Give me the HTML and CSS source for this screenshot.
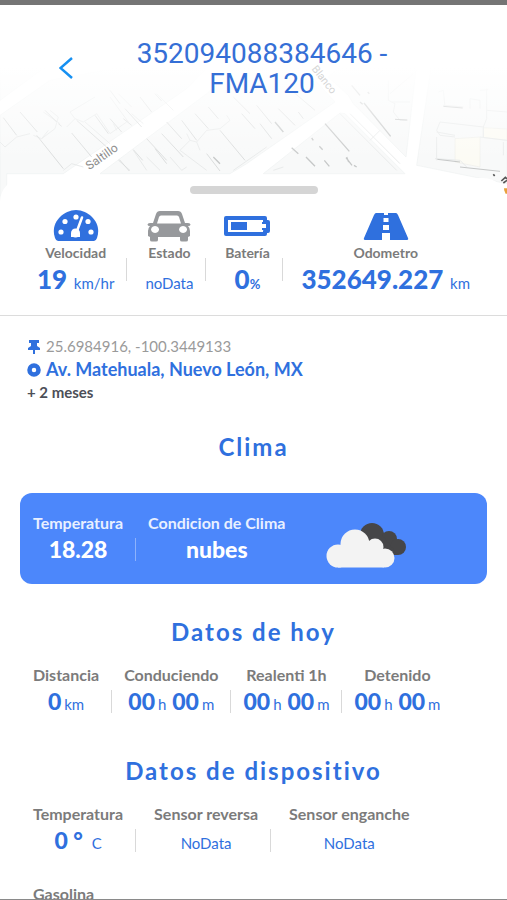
FILE: index.html
```html
<!DOCTYPE html>
<html lang="es">
<head>
<meta charset="utf-8">
<meta name="viewport" content="width=device-width, initial-scale=1">
<title>352094088384646 - FMA120</title>
<link rel="stylesheet" href="styles.css">
</head>
<body>
<div class="app">
  <header class="hero">
    <svg class="map" viewBox="0 0 1521 615" preserveAspectRatio="xMidYMax slice" aria-hidden="true">
      <defs>
        <linearGradient id="fade" x1="0" y1="0" x2="0" y2="1">
          <stop offset="0.34" stop-color="#fff"/>
          <stop offset="0.8" stop-color="#fff" stop-opacity="0"/>
        </linearGradient>
      </defs>
      <g fill="#f8f9f9" stroke="#eff1f1" stroke-width="2">
        <path d="M0 355 150 250 420 200 620 215 560 275 190 530 20 530 20 615H0z"/>
        <path d="M0 200H150L0 310z"/>
        <path d="M300 530 620 290 720 200 900 200 1005 315 740 500 690 530z"/>
        <path d="M790 530 1020 348 1035 350 1215 530z"/>
        <path d="M1030 200H1250L1218 480 1060 320 1045 295 985 240z"/>
        <path d="M1295 200H1521V560L1250 505z"/>
      </g>
      <g fill="#fcfbf4" stroke="#efefea" stroke-width="2">
        <path d="M1365 425 1440 420V510L1365 495z"/>
        <path d="M1450 392 1521 396V430L1450 422z"/>
      </g>
      <g fill="none" stroke="#e9ebeb" stroke-width="3">
        <path d="M0 435 15 450 50 420 90 410M100 415 125 425 165 395 175 360 150 340M125 425 145 400M200 390 225 365 250 375 290 350M225 365 210 345 285 300M290 350 330 410 380 375M350 400 340 380M190 520 215 500 250 510M130 345 180 380M255 375 330 440M330 300 385 375M395 350 430 380M470 290 520 340M355 290 395 330"/>
        <path d="M355 490 390 520M400 460 440 520M440 480 480 520M510 480 545 520 560 510M540 460 570 430 590 435 620 400 660 395 690 370 680 355M540 460 620 520M570 430 560 410M590 435 600 460M700 520 800 450"/>
        <path d="M1020 350 1190 520M1050 350 1200 500M1110 430 1140 400M820 520 850 510M1165 250V310L1185 320 1180 345 1200 370H1220M1175 315H1230M1170 290 1240 230"/>
        <path d="M1315 285 1330 280 1335 330M1330 325 1390 330M1410 335V305L1440 310V335M1460 275V365L1450 390V420M1440 280 1465 278M1320 375 1450 390M1320 375 1310 400 1320 415 1365 420M1310 490V420M1305 485 1380 490 1400 510M1460 340 1521 345M1310 405 1365 415M1440 420 1521 430M1510 435V475"/>
      </g>
      <g fill="none" stroke="#dbdddd" stroke-width="3">
        <path d="M10 362 50 415M60 345 112 405M110 415 190 515M135 340 170 375M175 380 185 388M215 408 275 480M230 370 320 450M285 355 325 410M330 365 365 405M375 335 425 390M370 365 395 385M420 300 455 345M465 290 485 312M330 280 360 320"/>
        <path d="M358 488 388 522M400 458 428 490M440 425 500 490M485 410 550 480M465 455 500 500M500 375 545 425M545 370 590 430M585 350 625 395M625 330 655 365M620 470 660 522M660 400 735 490M725 350 765 395M700 300 750 350"/>
        <path d="M770 325 815 380M780 380 815 425M835 335 885 385M895 345 910 365M880 285 945 340M825 375 850 405"/>
      </g>
      <g fill="none" stroke="#c6c8c8" stroke-width="4">
        <path d="M975 380 1048 463M1092 318 1172 418M875 452 895 470M918 480 945 508M958 448 968 458M973 490 988 508M1038 482 1056 505M1062 505 1070 510M1080 315 1088 322M1055 265 1080 295M935 423 940 430M1103 285 1108 290M1040 480 1046 495M825 375 850 405M640 480 660 500"/>
        <path d="M1330 328 1388 333M1312 487 1380 495M1380 510 1500 523M1185 367 1222 369" stroke-width="3"/>
      </g>
      <path fill="url(#fade)" d="M0 0H1521V615H0z"/>
      <g fill="#8d8d8d" font-family="Roboto, sans-serif" font-size="36">
        <text transform="translate(268 520) rotate(-35)">Saltillo</text>
        <text transform="translate(934 216) rotate(52)" fill="#d6d6d6" font-size="32">Blanco</text>
      </g>
      <path d="M1480 532 1484 537M1504 552 1516 541 1521 546M1510 558 1521 550" stroke="#555" stroke-width="5" fill="none"/>
      <path d="M1512 574H1521V590H1514z" fill="#e9a13b"/>
    </svg>
    <button class="back" type="button" aria-label="Atrás">
      <svg viewBox="0 0 14 22" width="14" height="22"><path d="M13 1 1.500 11 13 21" fill="none" stroke="#1690f2" stroke-width="2.500"/></svg>
    </button>
    <h1 class="title">352094088384646 - FMA120</h1>
  </header>

  <main class="sheet">
    <div class="grip"></div>

    <section class="stats wide summary">
      <div class="stat">
        <svg class="icon" viewBox="0 0 46 32" width="46" height="32">
          <path fill="#2f70de" d="M5 31Q3 31 2 28C-1 19 2 12 7 7 11 3 17 0 23 0s12 3 16 7c5 5 8 12 5 21q-1 3-3 3z"/>
          <g fill="#fff"><circle cx="12" cy="11.500" r="2.600"/><circle cx="23" cy="7" r="2.600"/><circle cx="35" cy="11.500" r="2.600"/><circle cx="8" cy="22" r="2.600"/><circle cx="38" cy="22" r="2.600"/><circle cx="22.500" cy="23" r="4.500"/><path d="M18 23h9v4H18z"/></g>
          <path d="M24 21 29 7.500" stroke="#fff" stroke-width="2.500" stroke-linecap="round"/>
        </svg>
        <span class="label">Velocidad</span>
        <span class="value"><b>19</b> <small>km/hr</small></span>
      </div>
      <i class="bar"></i>
      <div class="stat">
        <svg class="icon" viewBox="0 0 44 32" width="44" height="32">
          <path fill="#97999c" fill-rule="evenodd" d="M13 1H31Q34 1 35 4L38 13H41Q43.500 13 43.500 14.500T41 16Q43 18 43 21V26L41 27V30Q41 31.500 39 31.500H35Q33 31.500 33 30V27H11V30Q11 31.500 9 31.500H5Q3 31.500 3 30V27L1 26V21Q1 18 3 16 .5 16 .5 14.500T3 13H6L9 4Q10 1 13 1zM14 5.500Q12.500 5.500 12 7L10 13.500H34L32 7Q31.500 5.500 30 5.500zM8 16a4 3.500 0 1 0 .1 0zM36 16a4 3.500 0 1 0 .1 0z"/>
        </svg>
        <span class="label">Estado</span>
        <span class="value"><small>noData</small></span>
      </div>
      <i class="bar"></i>
      <div class="stat">
        <svg class="icon" viewBox="0 0 46 32" width="46" height="32">
          <path fill="none" stroke="#2f70de" stroke-width="4" stroke-linejoin="round" d="M2 8H41V12H44V21H41V24H2z"/>
          <path fill="#2f70de" d="M7 12H23V20H7zM38 12h4v2h-4zM38 18h4v2h-4z"/>
        </svg>
        <span class="label">Batería</span>
        <span class="value"><b>0</b><small class="percent">%</small></span>
      </div>
      <i class="bar"></i>
      <div class="stat">
        <svg class="icon" viewBox="0 0 46 32" width="46" height="32">
          <path fill="#2f70de" d="M13 3H33Q34 3 35 5L45 28Q46 30 43 30H3Q0 30 1 28L11 5Q12 3 13 3z"/>
          <path fill="#fff" d="M21 2h4v3h-4zM20.500 8h5v4h-5zM20 15h6v5h-6zM19 23h8v8h-8z"/>
        </svg>
        <span class="label">Odometro</span>
        <span class="value"><b>352649.227</b> <small>km</small></span>
      </div>
    </section>

    <section class="place">
      <p class="coords">
        <svg viewBox="0 0 14 14" width="14" height="14"><path fill="#2f70de" d="M2 0H12V3H10V6L13 8V10H8V14H6V10H1V8L4 6V3H2z"/></svg>
        25.6984916, -100.3449133
      </p>
      <p class="address">
        <svg viewBox="0 0 14 14" width="14" height="14"><circle cx="7" cy="7" r="4.500" fill="none" stroke="#2f70de" stroke-width="4.500"/></svg>
        Av. Matehuala, Nuevo León, MX
      </p>
      <p class="age">+ 2 meses</p>
    </section>

    <h2 class="heading climate">Clima</h2>
    <section class="weather stats">
      <div class="stat">
        <span class="label">Temperatura</span>
        <span class="value"><b>18.28</b></span>
      </div>
      <i class="bar"></i>
      <div class="stat">
        <span class="label">Condicion de Clima</span>
        <span class="value"><b>nubes</b></span>
      </div>
      <svg class="clouds" viewBox="0 0 81 46" width="81" height="46" aria-hidden="true">
        <g fill="#464648"><circle cx="46" cy="13" r="12"/><circle cx="63" cy="17" r="8"/><circle cx="72" cy="25" r="8"/><path d="M40 13H56L72 33H50z"/></g>
        <g fill="#f3f3f3"><circle cx="12" cy="34" r="11.500"/><circle cx="29" cy="22" r="14.500"/><circle cx="49" cy="25" r="8.500"/><circle cx="59" cy="36" r="9.500"/><path d="M12 24 29 20 50 20 58 30V45.500H12z"/></g>
      </svg>
    </section>

    <h2 class="heading">Datos de hoy</h2>
    <section class="stats today">
      <div class="stat">
        <span class="label">Distancia</span>
        <span class="value"><b>0</b><small>km</small></span>
      </div>
      <i class="bar"></i>
      <div class="stat">
        <span class="label">Conduciendo</span>
        <span class="value"><b>00</b><small>h</small> <b>00</b><small>m</small></span>
      </div>
      <i class="bar"></i>
      <div class="stat">
        <span class="label">Realenti 1h</span>
        <span class="value"><b>00</b><small>h</small> <b>00</b><small>m</small></span>
      </div>
      <i class="bar"></i>
      <div class="stat">
        <span class="label">Detenido</span>
        <span class="value"><b>00</b><small>h</small> <b>00</b><small>m</small></span>
      </div>
    </section>

    <h2 class="heading">Datos de dispositivo</h2>
    <section class="stats wide device">
      <div class="stat">
        <span class="label">Temperatura</span>
        <span class="value"><b>0 °</b> <small>C</small></span>
      </div>
      <i class="bar"></i>
      <div class="stat">
        <span class="label">Sensor reversa</span>
        <span class="value"><small>NoData</small></span>
      </div>
      <i class="bar"></i>
      <div class="stat">
        <span class="label">Sensor enganche</span>
        <span class="value"><small>NoData</small></span>
      </div>
    </section>
    <section class="stats">
      <div class="stat"><span class="label">Gasolina</span></div>
    </section>
  </main>
</div>
</body>
</html>
```
FILE: styles.css
```css
* { box-sizing: border-box; }

body {
  margin: 0;
  background: #fff;
  color: #2f70de;
  font-family: Lato, "Liberation Sans", sans-serif;
}

.app {
  display: flex;
  flex-direction: column;
  height: 100vh;
  overflow: hidden;
  border-top: 5px solid #757575;
  border-bottom: 1px solid #8a8a8a;
}

.hero {
  position: relative;
  flex: none;
  display: flex;
  align-items: flex-start;
  padding: 34px 96px 103px 59px;
}

.map {
  position: absolute;
  left: 0;
  bottom: 0;
  width: 100%;
  height: 205px;
}

.back {
  position: relative;
  margin: 18px 0 0;
  padding: 0;
  border: 0;
  background: none;
  line-height: 0;
}

.title {
  position: relative;
  flex: 1;
  margin: 0 0 0 40px;
  color: #356fd6;
  font: 400 28px/30px Roboto, sans-serif;
  text-align: center;
}

.sheet {
  position: relative;
  flex: 1;
  min-height: 0;
  margin-top: -24px;
  padding-top: 8px;
  overflow: hidden;
  border-radius: 24px 24px 0 0;
  background: #fff;
}

.grip {
  width: 128px;
  height: 8px;
  margin: 0 auto;
  border-radius: 4px;
  background: #d5d5d5;
}

.stats {
  display: flex;
  align-items: flex-end;
  padding: 0 33px;
}

.stat {
  display: flex;
  flex-direction: column;
  align-items: center;
  white-space: nowrap;
}

.bar {
  flex: none;
  width: 1px;
  height: 23px;
  margin: 0 12px 5px;
  background: #d9d9d9;
}

.wide .bar { margin-right: 18px; }

.label {
  color: #7b7b7b;
  font-size: 16px;
  font-weight: 700;
  line-height: 18px;
}

.value {
  height: 34px;
  font-size: 23px;
  line-height: 34px;
}

.value b { font-weight: 900; }

.value small {
  margin-left: 3px;
  font-size: 15px;
}

.value small:only-child { margin-left: 0; }

.summary {
  justify-content: center;
  padding: 16px 20px 19px;
  border-bottom: 1px solid #dcdcdc;
}

.summary .label { font-size: 14px; }
.summary .value { font-size: 26px; }
.summary .value small { margin-left: 0; }
.summary .percent { font-size: 13px; font-weight: 700; }
.summary .bar { margin-bottom: 15px; }
.icon { margin-bottom: 2px; }

.place { padding: 19px 27px 0; }

.place p {
  display: flex;
  align-items: center;
  gap: 5px;
  margin: 0;
  line-height: 23px;
}

.coords { color: #9a9a9a; font-size: 15px; }
.address { font-size: 18px; font-weight: 700; }
.place .age { color: #4c4f57; font-size: 15px; font-weight: 700; }

.heading {
  margin: 33px 0 19px;
  font-size: 24px;
  font-weight: 700;
  letter-spacing: 2px;
  line-height: 30px;
  text-align: center;
}

.climate { margin: 28px 0 31px; }

.weather {
  margin: 0 20px;
  padding: 21px 13px 18px;
  border-radius: 12px;
  background: #4c87fb;
  color: #fff;
}

.weather .label { color: #e9f0ff; }
.weather .bar { background: #8db2fc; }
.clouds { margin: 0 0 -2px 41px; }
.today { padding-bottom: 5px; }
.device { padding-bottom: 28px; }
```
